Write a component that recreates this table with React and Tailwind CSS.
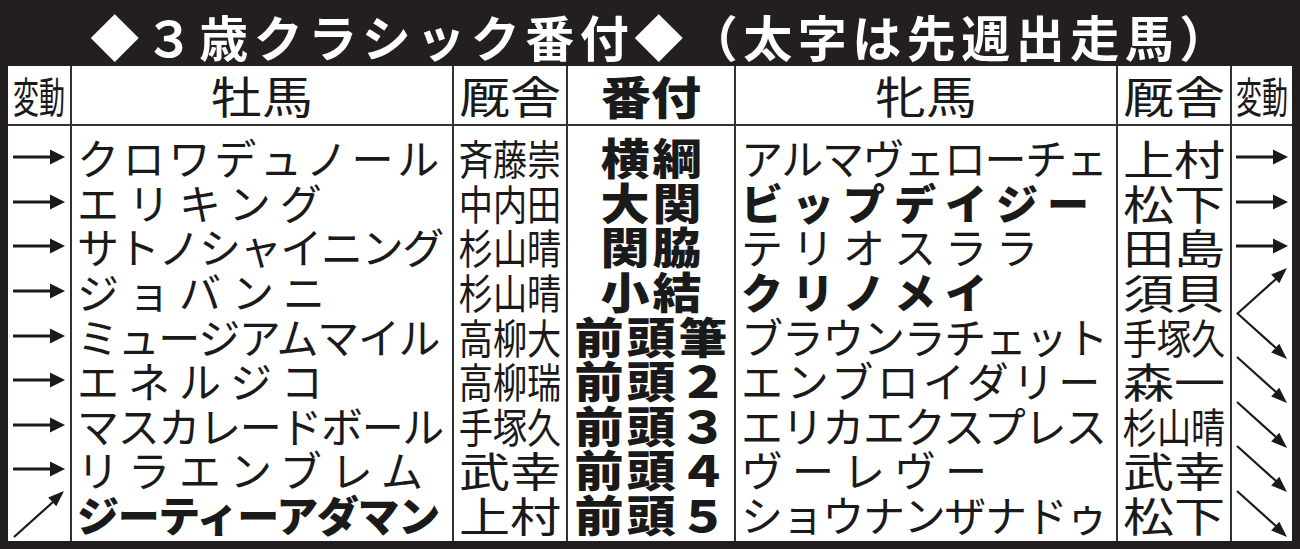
import React from "react";

const rows = [
  { la: "r", lh: "クロワデュノール", lt: "斉藤崇", rank: "横綱", rh: "アルマヴェローチェ", rt: "上村", ra: "r" },
  { la: "r", lh: "エリキング", lt: "中内田", rank: "大関", rh: "ビップデイジー", rb: true, rt: "松下", ra: "r" },
  { la: "r", lh: "サトノシャイニング", lt: "杉山晴", rank: "関脇", rh: "テリオスララ", rt: "田島", ra: "r" },
  { la: "r", lh: "ジョバンニ", lt: "杉山晴", rank: "小結", rh: "クリノメイ", rb: true, rt: "須貝", ra: "up" },
  { la: "r", lh: "ミュージアムマイル", lt: "高柳大", rank: "前頭筆", rh: "ブラウンラチェット", rt: "手塚久", ra: "down" },
  { la: "r", lh: "エネルジコ", lt: "高柳瑞", rank: "前頭２", rh: "エンブロイダリー", rt: "森一", ra: "down" },
  { la: "r", lh: "マスカレードボール", lt: "手塚久", rank: "前頭３", rh: "エリカエクスプレス", rt: "杉山晴", ra: "down" },
  { la: "r", lh: "リラエンブレム", lt: "武幸", rank: "前頭４", rh: "ヴーレヴー", rt: "武幸", ra: "down" },
  { la: "up", lh: "ジーティーアダマン", lb: true, lt: "上村", rank: "前頭５", rh: "ショウナンザナドゥ", rt: "松下", ra: "down" },
];

const Arrow = ({ dir }) => {
  if (dir === "r") {
    return (
      <svg width="52" height="16" viewBox="0 0 52 16">
        <line x1="0" y1="8" x2="40" y2="8" stroke="#1a1a1a" strokeWidth="2.8" />
        <polygon points="37,0.5 52,8 37,15.5" fill="#1a1a1a" />
      </svg>
    );
  }
  if (dir === "up") {
    return (
      <svg width="52" height="46" viewBox="0 0 52 46" className="overflow-visible">
        <line x1="1" y1="46" x2="40" y2="11" stroke="#1a1a1a" strokeWidth="2.2" />
        <polygon points="51,0 43.3,15.3 35.2,6.4" fill="#1a1a1a" />
      </svg>
    );
  }
  return (
    <svg width="52" height="46" viewBox="0 0 52 46" className="overflow-visible">
      <line x1="1" y1="0" x2="40" y2="35" stroke="#1a1a1a" strokeWidth="2.2" />
      <polygon points="51,46 35.2,39.6 43.3,30.7" fill="#1a1a1a" />
    </svg>
  );
};

const Name = ({ text, bold }) => {
  const n = [...text].length;
  const pitch = Math.min(51, 366 / n);
  return (
    <span
      className={bold ? "font-black whitespace-nowrap" : "font-normal whitespace-nowrap"}
      style={{ letterSpacing: `${pitch - 42}px` }}
    >
      {text}
    </span>
  );
};

// 3文字は長体、2文字は平体で枠いっぱいに
const Trainer = ({ text }) => (
  <span
    className={
      [...text].length === 3
        ? "inline-block whitespace-nowrap text-[36px] leading-[36px] scale-x-[0.95] scale-y-[1.15]"
        : "inline-block whitespace-nowrap text-[36px] leading-[36px] scale-x-[1.42] scale-y-[1.15]"
    }
  >
    {text}
  </span>
);

const Column = ({ width, first, head, children }) => (
  <div className={`${width} flex flex-col ${first ? "" : "border-l-2 border-[#333]"}`}>
    <div className="h-[60px] border-b-2 border-[#333] flex items-center justify-center">{head}</div>
    <div className="flex flex-col pt-[9px]">{children}</div>
  </div>
);

const Cell = ({ className, children }) => (
  <div className={`h-[44.6px] flex items-center ${className}`}>{children}</div>
);

const Head = ({ children }) => (
  <span className="inline-block whitespace-nowrap text-[51px] leading-[48px] scale-y-[0.88]">{children}</span>
);

const HeadSmall = () => (
  <span className="inline-block whitespace-nowrap text-[26px] leading-[40px] scale-y-[1.6]">変動</span>
);

export default function App() {
  return (
    <div className="w-[1300px] h-[549px] bg-[#231f20] flex flex-col px-2 pb-2 font-['Noto_Sans_CJK_JP',sans-serif] text-[#1a1a1a]">
      <div className="h-[66px] flex items-center justify-center text-white font-bold text-[49px] leading-none tracking-[5.5px] pt-1 pl-[24px]">
        ◆３歳クラシック番付◆（太字は先週出走馬）
      </div>
      <div className="flex-1 bg-white flex">
        <Column width="w-[62px]" first head={<HeadSmall />}>
          {rows.map((r, i) => (
            <Cell key={i} className="justify-center">
              <Arrow dir={r.la} />
            </Cell>
          ))}
        </Column>
        <Column width="w-[382px]" head={<Head>牡馬</Head>}>
          {rows.map((r, i) => (
            <Cell key={i} className="pl-[5px] text-[42px] leading-[44px]">
              <Name text={r.lh} bold={r.lb} />
            </Cell>
          ))}
        </Column>
        <Column width="w-[114px]" head={<Head>厩舎</Head>}>
          {rows.map((r, i) => (
            <Cell key={i} className="justify-center">
              <Trainer text={r.lt} />
            </Cell>
          ))}
        </Column>
        <Column
          width="w-[168px]"
          head={
            <span className="inline-block whitespace-nowrap text-[50px] font-black leading-[48px] scale-y-[0.9]">
              番付
            </span>
          }
        >
          {rows.map((r, i) => (
            <Cell key={i} className="justify-center">
              <span className="inline-block whitespace-nowrap text-[49px] font-black leading-[44px] tracking-[3px] pl-[3px] scale-y-[0.88]">
                {r.rank}
              </span>
            </Cell>
          ))}
        </Column>
        <Column width="w-[382px]" head={<Head>牝馬</Head>}>
          {rows.map((r, i) => (
            <Cell key={i} className="pl-[5px] text-[42px] leading-[44px]">
              <Name text={r.rh} bold={r.rb} />
            </Cell>
          ))}
        </Column>
        <Column width="w-[114px]" head={<Head>厩舎</Head>}>
          {rows.map((r, i) => (
            <Cell key={i} className="justify-center">
              <Trainer text={r.rt} />
            </Cell>
          ))}
        </Column>
        <Column width="w-[62px]" head={<HeadSmall />}>
          {rows.map((r, i) => (
            <Cell key={i} className="justify-center">
              <Arrow dir={r.ra} />
            </Cell>
          ))}
        </Column>
      </div>
    </div>
  );
}
